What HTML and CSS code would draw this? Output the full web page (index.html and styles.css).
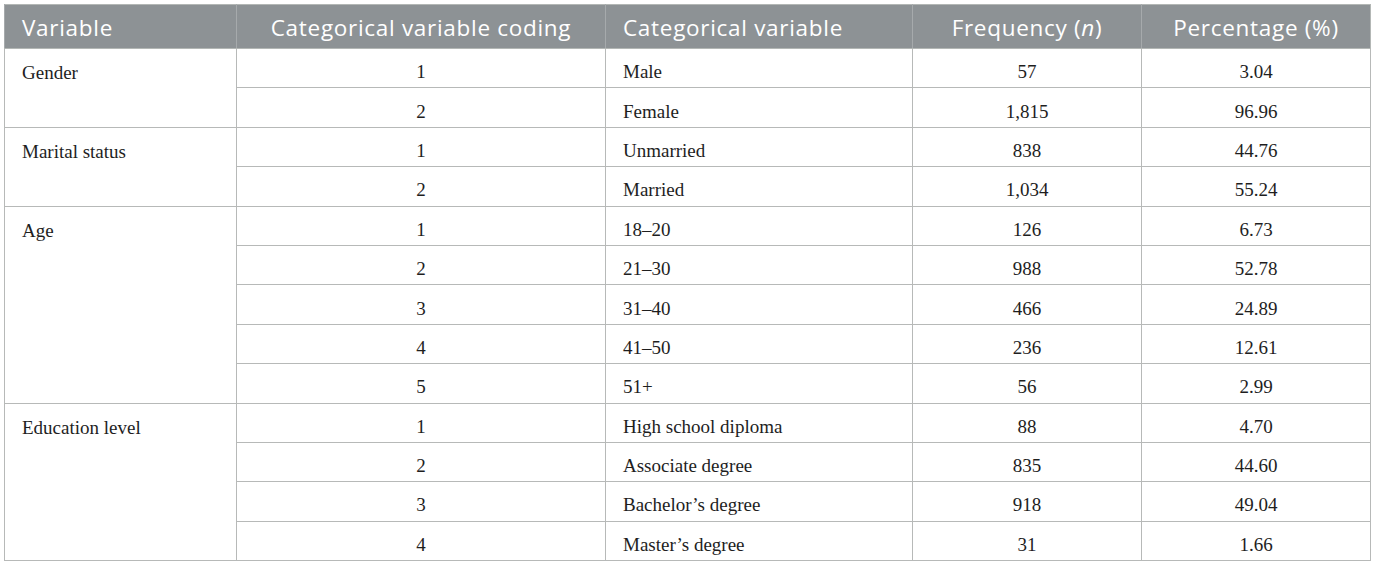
FILE: index.html
```html
<!DOCTYPE html>
<html>
<head>
<meta charset="utf-8">
<link rel="stylesheet" href="styles.css">
</head>
<body>
<table class="data">
  <colgroup>
    <col class="c1"><col class="c2"><col class="c3"><col class="c4"><col class="c5">
  </colgroup>
  <thead>
    <tr class="head">
      <th class="left">Variable</th>
      <th>Categorical variable coding</th>
      <th class="left">Categorical variable</th>
      <th>Frequency (<i>n</i>)</th>
      <th>Percentage (%)</th>
    </tr>
  </thead>
  <tbody>
    <tr><td class="var" rowspan="2">Gender</td><td class="ctr">1</td><td>Male</td><td class="ctr">57</td><td class="ctr">3.04</td></tr>
    <tr><td class="ctr">2</td><td>Female</td><td class="ctr">1,815</td><td class="ctr">96.96</td></tr>
    <tr><td class="var" rowspan="2">Marital status</td><td class="ctr">1</td><td>Unmarried</td><td class="ctr">838</td><td class="ctr">44.76</td></tr>
    <tr><td class="ctr">2</td><td>Married</td><td class="ctr">1,034</td><td class="ctr">55.24</td></tr>
    <tr><td class="var" rowspan="5">Age</td><td class="ctr">1</td><td>18–20</td><td class="ctr">126</td><td class="ctr">6.73</td></tr>
    <tr><td class="ctr">2</td><td>21–30</td><td class="ctr">988</td><td class="ctr">52.78</td></tr>
    <tr><td class="ctr">3</td><td>31–40</td><td class="ctr">466</td><td class="ctr">24.89</td></tr>
    <tr><td class="ctr">4</td><td>41–50</td><td class="ctr">236</td><td class="ctr">12.61</td></tr>
    <tr><td class="ctr">5</td><td>51+</td><td class="ctr">56</td><td class="ctr">2.99</td></tr>
    <tr><td class="var" rowspan="4">Education level</td><td class="ctr">1</td><td>High school diploma</td><td class="ctr">88</td><td class="ctr">4.70</td></tr>
    <tr><td class="ctr">2</td><td>Associate degree</td><td class="ctr">835</td><td class="ctr">44.60</td></tr>
    <tr><td class="ctr">3</td><td>Bachelor’s degree</td><td class="ctr">918</td><td class="ctr">49.04</td></tr>
    <tr><td class="ctr">4</td><td>Master’s degree</td><td class="ctr">31</td><td class="ctr">1.66</td></tr>
  </tbody>
</table>
</body>
</html>
```
FILE: styles.css
```css
html, body {
  margin: 0;
  padding: 0;
  background: #ffffff;
}
body {
  padding: 4px 0 0 4px;
}
.data {
  border-collapse: collapse;
  table-layout: fixed;
  width: 1366px;
  border: 1px solid #b3b7b5;
}
.c1 { width: 232px; }
.c2 { width: 369px; }
.c3 { width: 307px; }
.c4 { width: 229px; }
.c5 { width: 229px; }
.data tr { height: 39.4px; }
.data tr.head { height: 44px; }
.data th {
  background: #8d9295;
  color: #ffffff;
  font-family: "Open Sans", "Noto Sans", sans-serif;
  font-weight: 400;
  font-size: 22.5px;
  line-height: 26px;
  padding: 2px 17px 0 17px;
  text-align: center;
  vertical-align: middle;
  border-left: 1px solid #a6aaac;
  border-bottom: 1px solid #b3b7b5;
  letter-spacing: 0.7px;
  white-space: nowrap;
}
.data th.left { text-align: left; }
.data th i { font-style: italic; }
.data td {
  font-family: "Liberation Serif", "Times New Roman", serif;
  font-size: 19px;
  line-height: 22px;
  color: #1e1e1e;
  padding: 8px 17px 0 17px;
  border: 1px solid #b7b9b8;
  vertical-align: middle;
  text-align: left;
}
.data td.ctr { text-align: center; }
.data td.var { vertical-align: top; padding-top: 13px; }
```
